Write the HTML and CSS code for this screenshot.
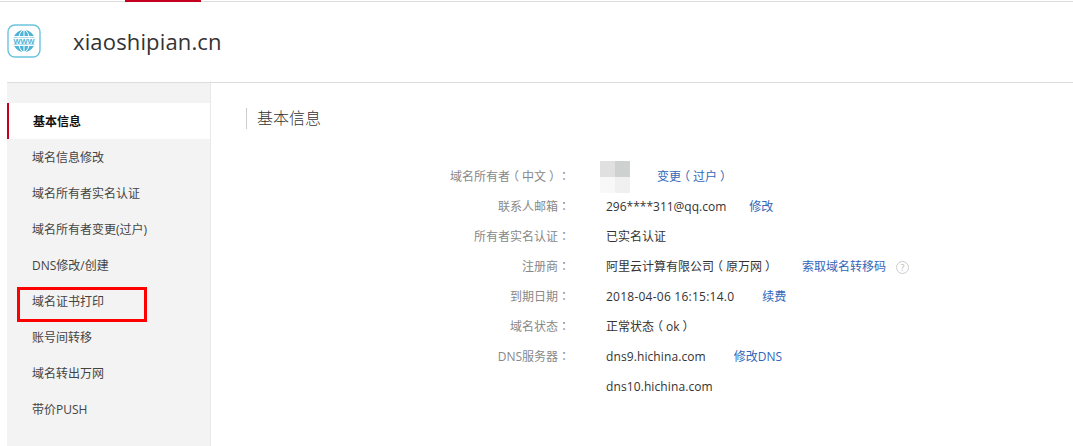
FILE: index.html
```html
<!DOCTYPE html>
<html lang="zh">
<head>
<meta charset="utf-8">
<title>xiaoshipian.cn</title>
<link rel="stylesheet" href="styles.css">
</head>
<body>
<div class="topbar"><div class="topbar-accent"></div></div>
<header class="header">
  <svg class="logo" width="34" height="34" viewBox="0 0 34 34">
    <rect x="1" y="1" width="32" height="32" rx="7" fill="#fff" stroke="#6cc3de" stroke-width="1.4"/>
    <circle cx="17" cy="17" r="11" fill="#4fb3d6"/>
    <path d="M6 12.5h22M6 21.5h22" stroke="#fff" stroke-width="1"/>
    <ellipse cx="17" cy="17" rx="5.5" ry="11" fill="none" stroke="#fff" stroke-width="1"/>
    <path d="M17 6v6M17 22v6" stroke="#fff" stroke-width="1"/>
    <rect x="5" y="13.5" width="24" height="7" fill="#fff"/>
    <text x="17" y="19.8" class="logo-text" text-anchor="middle">WWW</text>
  </svg>
  <h1 class="domain">xiaoshipian.cn</h1>
</header>
<div class="main">
  <nav class="sidebar">
    <a class="nav-item active">基本信息</a>
    <a class="nav-item">域名信息修改</a>
    <a class="nav-item">域名所有者实名认证</a>
    <a class="nav-item">域名所有者变更(过户)</a>
    <a class="nav-item">DNS修改/创建</a>
    <a class="nav-item marked">域名证书打印</a>
    <a class="nav-item">账号间转移</a>
    <a class="nav-item">域名转出万网</a>
    <a class="nav-item">带价PUSH</a>
  </nav>
  <section class="content">
    <h2 class="section-title">基本信息</h2>
    <div class="rows">
      <div class="row"><span class="label">域名所有者<span class="p bracket">（</span>中文<span class="p bracket">）</span><span class="p">：</span></span><span class="value"><span class="blur"><i class="b1"></i><i class="b2"></i><i class="b3"></i><i class="b4"></i></span><a class="link link-owner">变更<span class="p bracket">（</span>过户<span class="p bracket">）</span></a></span></div>
      <div class="row"><span class="label">联系人邮箱<span class="p">：</span></span><span class="value"><span>296****311@qq.com</span><a class="link link-mail">修改</a></span></div>
      <div class="row"><span class="label">所有者实名认证<span class="p">：</span></span><span class="value"><span>已实名认证</span></span></div>
      <div class="row"><span class="label">注册商<span class="p">：</span></span><span class="value"><span>阿里云计算有限公司<span class="p bracket">（</span>原万网<span class="p bracket">）</span></span><a class="link link-reg">索取域名转移码</a><span class="help">?</span></span></div>
      <div class="row"><span class="label">到期日期<span class="p">：</span></span><span class="value"><span class="date">2018-04-06 16:15:14.0</span><a class="link link-renew">续费</a></span></div>
      <div class="row"><span class="label">域名状态<span class="p">：</span></span><span class="value"><span>正常状态<span class="p bracket">（</span>ok<span class="p bracket">）</span></span></span></div>
      <div class="row"><span class="label">DNS服务器<span class="p">：</span></span><span class="value"><span class="host">dns9.hichina.com</span><a class="link link-dns">修改DNS</a></span></div>
      <div class="row"><span class="label"></span><span class="value"><span class="host">dns10.hichina.com</span></span></div>
    </div>
  </section>
</div>
</body>
</html>
```
FILE: styles.css
```css
*, *::after { box-sizing: border-box; }
html, body { margin: 0; padding: 0; }
body {
  width: 1073px;
  height: 446px;
  overflow: hidden;
  background: #fff;
  font-family: "Open Sans", "Noto Sans CJK SC", sans-serif;
  font-size: 12px;
  color: #333;
  text-spacing-trim: space-all;
}
.p {
  display: inline-block;
  width: 12px;
  line-height: 0;
  text-align: center;
  font-family: "Noto Sans CJK TC", sans-serif;
}
.bracket { font-feature-settings: "halt" 1; }
.topbar { height: 2px; padding-left: 125px; background: linear-gradient(#fff 1px, #ddd 1px); }
.topbar-accent { width: 76px; height: 2px; background: #c40020; }
.header {
  height: 81px;
  margin-left: 7px;
  border-bottom: 1px solid #ddd;
  display: flex;
  align-items: center;
  padding-bottom: 3px;
}
.logo { flex: none; }
.logo-text { font: bold 7.5px "Liberation Sans", sans-serif; fill: #4fb3d6; }
.domain {
  margin: 0 0 0 32px;
  font-size: 22px;
  font-weight: 400;
  letter-spacing: 0.15px;
  color: #333;
}
.main { display: flex; margin-left: 7px; height: 363px; }
.sidebar {
  width: 204px;
  flex: none;
  background: #f3f3f3;
  border-right: 1px solid #e8e8e8;
  padding-top: 20px;
}
.nav-item {
  display: block;
  position: relative;
  height: 36px;
  line-height: 38px;
  padding-left: 25px;
  color: #444;
}
.nav-item.active {
  background: #fff;
  border-left: 2px solid #c40020;
  padding-left: 24px;
  color: #111;
  font-weight: 700;
}
.nav-item.marked::after {
  content: "";
  position: absolute;
  left: 10px;
  top: 4px;
  width: 130px;
  height: 35px;
  border: 3px solid #f00;
}
.content { flex: 1; padding: 25px 0 0 35px; }
.section-title {
  margin: 0;
  height: 21px;
  line-height: 20px;
  padding-left: 10px;
  border-left: 1px solid #ccc;
  font-size: 16px;
  font-weight: 300;
  color: #333;
}
.rows { margin-top: 33px; }
.row { display: flex; height: 30px; line-height: 30px; }
.label { width: 324px; flex: none; text-align: right; color: #888; }
.value { margin-left: 36px; display: flex; align-items: center; white-space: pre; color: #333; }
.date { letter-spacing: 0.24px; }
.host { letter-spacing: 0.1px; }
.link { color: #3366b8; }
.blur { display: grid; grid-template-columns: 15px 15px; grid-template-rows: 16px 16px; margin: -1px 0 0 -6px; }
.blur i { display: block; }
.b1 { background: #e0e0e0; }
.b2 { background: #cfd0d0; }
.b3 { background: #f8f8f8; }
.b4 { background: #f0f0f0; }
.link-owner { margin-left: 27px; }
.link-mail { margin-left: 23px; }
.link-reg { margin-left: 28px; }
.link-renew { margin-left: 28px; }
.link-dns { margin-left: 28px; }
.help {
  margin-left: 10px;
  width: 13px;
  height: 13px;
  border: 1px solid #ccc;
  border-radius: 50%;
  font-size: 9px;
  line-height: 11px;
  text-align: center;
  color: #bbb;
}
```
